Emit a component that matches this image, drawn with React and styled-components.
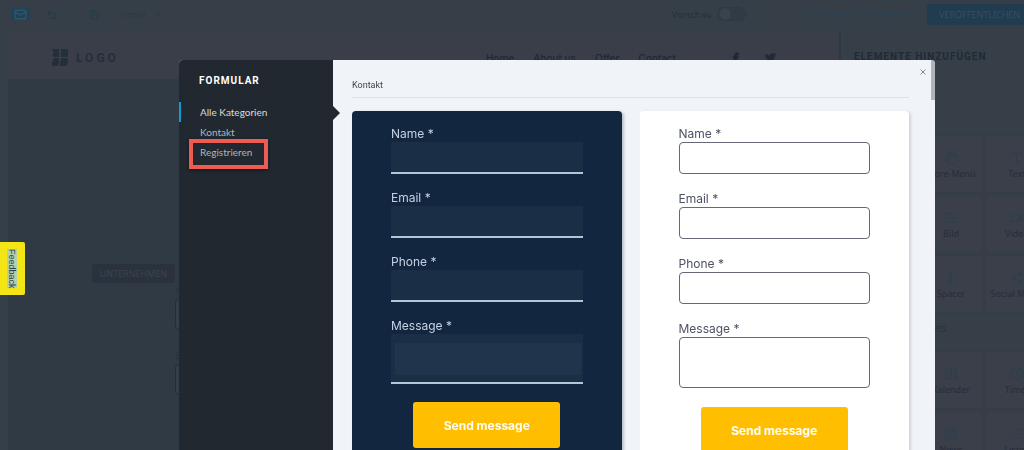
import React from 'react';
import styled, { createGlobalStyle } from 'styled-components';
import {
  Undo2, Redo2, Save, Mail, ChevronDown, MessageCircle, Facebook, Twitter, Type, Image as ImageIcon,
  Video, Share2, Grid2x2, Clock, FileText, List, MoveVertical, Hand, Menu, Square, Columns2,
} from 'lucide-react';

const GlobalStyle = createGlobalStyle`
  * { box-sizing: border-box; }
  body { margin: 0; overflow: hidden; background: #363f47; font-family: "Noto Sans", "Open Sans", sans-serif; }
  button, input, textarea { font: inherit; }
`;

const Editor = styled.div`
  display: flex;
  flex-direction: column;
  height: 100vh;
  overflow: hidden;
  background: #363f47;
  color: #28323e;
`;

const Toolbar = styled.header`
  display: flex;
  flex: none;
  align-items: center;
  height: 32px;
  padding: 0 0 4px 11px;
  color: #29465a;
  font-size: 9px;
`;

const MailButton = styled.button`
  display: flex;
  align-items: center;
  justify-content: center;
  width: 19px;
  height: 12px;
  margin-right: 16px;
  padding: 0;
  border: 0;
  background: #1f4459;
  color: #36596a;
`;

const ToolButton = styled.button`
  display: flex;
  align-items: center;
  gap: 8px;
  margin-right: ${(p) => p.$gap || 0}px;
  padding: 0;
  border: 0;
  background: none;
  color: ${(p) => (p.$faint ? '#31414b' : '#263b48')};
`;

const Preview = styled.label`
  display: flex;
  align-items: center;
  gap: 6px;
  margin: 0 11px 0 auto;
  color: #242f3b;
`;

const Toggle = styled.input`
  appearance: none;
  width: 29px;
  height: 14px;
  margin: 0;
  border: 1px solid #2f3943;
  border-radius: 7px;
  background: radial-gradient(circle at 7px 6px, #39434c 5px, #313b45 6px);
`;

const ToolLink = styled.a`
  width: 122px;
  margin-left: 37px;
  color: #2c4353;
  font-size: 10px;
  text-decoration: none;
  white-space: nowrap;
`;

const Publish = styled.button`
  width: 97px;
  height: 21px;
  padding: 0 0 0 12px;
  border: 0;
  border-radius: 2px 0 0 2px;
  background: #213b4f;
  color: #354f61;
  font-size: 9px;
  text-align: left;
  white-space: nowrap;
`;

const Workspace = styled.div`
  display: flex;
  flex: 1;
  min-height: 0;
  padding-left: 8px;
`;

const Canvas = styled.main`
  flex: 1;
  min-width: 0;
  background: #2f3a44;
`;

const SiteHeader = styled.div`
  display: flex;
  align-items: center;
  height: 47px;
  padding: 4px 63px 0 44px;
  background: #393e48;
`;

const Logo = styled.div`
  display: flex;
  flex: 1;
  align-items: center;
  gap: 7px;
  color: #252f3b;
  font-family: Roboto, sans-serif;
  font-size: 12px;
  font-weight: 700;
  letter-spacing: 3px;
`;

const SiteNav = styled.nav`
  display: flex;
  gap: 19px;
  align-items: center;
  color: #202936;
  font-family: Inter, sans-serif;
  font-size: 10px;
  font-weight: 500;

  a { color: inherit; text-decoration: none; }
`;

const Social = styled.div`
  display: flex;
  gap: 24px;
  margin-left: 35px;
`;

const Hero = styled.section`
  display: flex;
  flex-direction: column;
  align-items: flex-start;
  padding: 185px 0 0 84px;
`;

const HeroButton = styled.button`
  width: 83px;
  height: 19px;
  padding: 0;
  border: 0;
  border-radius: 2px;
  background: #2a323e;
  color: #3b434e;
  font-size: 9px;
`;

const HeroForm = styled.div`
  display: grid;
  gap: 2px;
  margin: 2px 0 0 83px;
  font-size: 9px;
  line-height: 12px;
`;

const HeroField = styled.label`
  display: grid;
  align-content: start;
  gap: 2px;
  height: 63px;
`;

const HeroInput = styled.input`
  width: 200px;
  height: 31px;
  border: 1px solid #222d38;
  border-radius: 4px;
  background: #343f49;
`;

const Elements = styled.aside`
  flex: none;
  width: 185px;
  padding: 17px 0 0 13px;
  border-left: 2px solid #303842;
  overflow: hidden;
`;

const ElementsTitle = styled.h2`
  margin: 0;
  color: #202a36;
  font-family: Roboto, sans-serif;
  font-size: 10px;
  line-height: 16px;
  font-weight: 700;
  letter-spacing: 1px;
  white-space: nowrap;
`;

const Group = styled.h3`
  margin: ${(p) => (p.$first ? '51px 0 4px' : '8px 0 16px')};
  padding-left: 54px;
  font-size: 10px;
  line-height: 16px;
  font-weight: 400;
`;

const Tiles = styled.div`
  display: grid;
  grid-template-columns: repeat(3, 62px);
  grid-auto-rows: 56px;
  gap: 4px;
`;

const Tile = styled.button`
  display: flex;
  flex-direction: column;
  align-items: center;
  justify-content: flex-end;
  gap: 2px;
  padding: 0 0 11px;
  border: 0;
  border-radius: 2px;
  background: #3a3f49;
  box-shadow: 0 0 2px #333b45;
  color: #262e3a;
  font-size: 9px;
  line-height: 14px;
  white-space: nowrap;

  svg { color: #2c404c; }
`;

const Feedback = styled.button`
  position: fixed;
  top: 242px;
  left: 0;
  width: 25px;
  height: 53px;
  padding: 0 2px 0 0;
  border: 0;
  border-radius: 0 2px 2px 0;
  background: #f4e616;
  color: #27414f;
  font-family: "Liberation Sans", sans-serif;
  font-size: 9px;
  line-height: 9px;
  writing-mode: vertical-rl;

  span { background: #b5cfae; }
`;

const Overlay = styled.div`
  position: fixed;
  inset: 60px 89px 0 179px;
  display: flex;
`;

const Dialog = styled.section`
  display: flex;
  flex: 1;
  border-radius: 4px 4px 0 0;
  overflow: hidden;
  background: #f0f3f8;
`;

const Side = styled.aside`
  flex: none;
  width: 154px;
  padding-top: 13px;
  background: #222830;
`;

const SideTitle = styled.h1`
  margin: 0 0 13px;
  padding-left: 20px;
  color: #ffffff;
  font-family: Roboto, sans-serif;
  font-size: 10px;
  font-weight: 700;
  line-height: 16px;
  letter-spacing: 1px;
`;

const Category = styled.a`
  position: relative;
  display: block;
  padding-left: 19px;
  border-left: 2px solid ${(p) => (p.$active ? '#179bcc' : 'transparent')};
  color: ${(p) => (p.$active ? '#d9dcdf' : '#b0b4b9')};
  font-family: Lato, sans-serif;
  font-size: 10px;
  line-height: 20px;
  text-decoration: none;
`;

const Highlight = styled.span`
  position: absolute;
  inset: -3px auto -7px 8px;
  width: 79px;
  border: 4px solid #ee5b50;
  box-shadow: 0 1px 3px #11151b;
`;

const Content = styled.div`
  position: relative;
  flex: 1;
  min-width: 0;
  padding: 18px 26px 0 19px;

  &::before {
    content: '';
    position: absolute;
    top: 46px;
    left: 0;
    border: solid transparent;
    border-width: 7px 0 7px 7px;
    border-left-color: #222830;
  }

  &::after {
    content: '';
    position: absolute;
    top: 0;
    right: 0;
    width: 4px;
    height: 40px;
    background: #b0b3ba;
  }
`;

const Close = styled.button`
  position: absolute;
  top: 8px;
  right: 8px;
  display: flex;
  padding: 0;
  border: 0;
  background: none;
  color: #858b92;
`;

const ContentTitle = styled.h2`
  margin: 0 0 13px;
  padding-bottom: 4px;
  border-bottom: 1px solid #dde1e6;
  color: #42464b;
  font-family: Roboto, sans-serif;
  font-size: 9px;
  font-weight: 400;
  line-height: 15px;
`;

const Cards = styled.div`
  display: grid;
  grid-template-columns: 1fr 1fr;
  gap: 18px;
`;

const Card = styled.form`
  display: flex;
  flex-direction: column;
  gap: ${(p) => (p.$dark ? 16 : 17)}px;
  height: 400px;
  padding: 15px 39px;
  border-radius: 4px;
  background: ${(p) => (p.$dark ? '#12263f' : '#ffffff')};
  box-shadow: 2px 1px 3px ${(p) => (p.$dark ? '#b9c0ca' : '#d0d2d8')};
  color: ${(p) => (p.$dark ? '#c5d2e2' : '#4c5263')};
  font-family: Inter, sans-serif;
`;

const Field = styled.label`
  display: flex;
  flex-direction: column;
  font-size: 12px;
  line-height: 16px;
`;

const boxStyle = (p) =>
  p.$dark
    ? 'border: 0; border-bottom: 2px solid #b3c6d6; background: #1a2e45;'
    : 'border: 1px solid #65677b; border-radius: 4px; background: #ffffff;';

const Input = styled.input`
  width: 100%;
  height: 32px;
  ${boxStyle}
`;

const Area = styled.textarea`
  width: 100%;
  height: ${(p) => (p.$dark ? 50 : 51)}px;
  resize: none;
  ${boxStyle}
  ${(p) => p.$dark && 'background: linear-gradient(#20354b, #20354b) 4px 9px / calc(100% - 6px) 32px no-repeat #1a2e45;'}
`;

const Send = styled.button`
  align-self: center;
  width: 147px;
  height: 46px;
  margin-top: 2px;
  padding: 0;
  border: 0;
  border-radius: 3px;
  background: #ffbf00;
  color: #fffdf0;
  font-size: 12px;
  font-weight: 700;
`;

const LogoMark = () => (
  <svg width="17" height="17" viewBox="0 0 17 17" fill="currentColor" aria-hidden="true">
    <path d="M0 0h7v8H2L0 6l2-2zM9 0h6l1 2v6H9V6L8 5l1-1zM2 9h5v5l-1 3H0v-4l1-1zM9 9h6l1 2v3l-2 3H8v-4l1-1z" />
  </svg>
);

const CloseMark = () => (
  <svg width="8" height="8" viewBox="0 0 8 8" fill="none" stroke="currentColor" aria-hidden="true">
    <path d="M1.5 1.5l5 5M6.5 1.5l-5 5" />
  </svg>
);

const basics = [
  ['Button', Square], ['Store-Menü', Hand], ['Text', Type],
  ['Icon', Grid2x2], ['Bild', Menu], ['Video', Video],
  ['Spalten', Columns2], ['Spacer', MoveVertical], ['Social Media', Share2],
];
const extras = [
  ['Formular', FileText], ['Kalender', Grid2x2], ['Timer', Clock],
  ['Bilder', ImageIcon], ['News', FileText], ['Listen', List],
];

function TileGrid({ items }) {
  return (
    <Tiles>
      {items.map(([name, Icon]) => (
        <Tile key={name} type="button"><Icon size={14} strokeWidth={2} />{name}</Tile>
      ))}
    </Tiles>
  );
}

function ContactForm({ dark = false }) {
  return (
    <Card $dark={dark}>
      {['Name', 'Email', 'Phone'].map((name) => (
        <Field key={name}>{name} *<Input type="text" $dark={dark} /></Field>
      ))}
      <Field>Message *<Area $dark={dark} /></Field>
      <Send type="button">Send message</Send>
    </Card>
  );
}

export default function App() {
  return (
    <>
      <GlobalStyle />
      <Editor>
        <Toolbar>
          <MailButton aria-label="Mail"><Mail size={13} strokeWidth={2} /></MailButton>
          <ToolButton $gap={11} aria-label="Undo"><Undo2 size={11} strokeWidth={3} /></ToolButton>
          <ToolButton $gap={10} $faint aria-label="Redo"><Redo2 size={11} /></ToolButton>
          <ToolButton $gap={20} aria-label="Save"><Save size={11} strokeWidth={2} /></ToolButton>
          <ToolButton>Home<ChevronDown size={8} strokeWidth={3} /></ToolButton>
          <Preview>Vorschau<Toggle type="checkbox" /></Preview>
          <ToolButton $faint aria-label="Comments"><MessageCircle size={11} /></ToolButton>
          <ToolLink href="#save">Speichern und beenden</ToolLink>
          <Publish>VERÖFFENTLICHEN</Publish>
        </Toolbar>
        <Workspace>
          <Canvas>
            <SiteHeader>
              <Logo><LogoMark />LOGO</Logo>
              <SiteNav>
                <a href="#home">Home</a>
                <a href="#about">About us</a>
                <a href="#offer">Offer</a>
                <a href="#contact">Contact</a>
                <Social>
                  <Facebook size={11} fill="currentColor" />
                  <Twitter size={11} fill="currentColor" />
                </Social>
              </SiteNav>
            </SiteHeader>
            <Hero>
              <HeroButton>UNTERNEHMEN</HeroButton>
              <HeroForm>
                <HeroField>Name<HeroInput /></HeroField>
                <HeroField>Email<HeroInput /></HeroField>
              </HeroForm>
            </Hero>
          </Canvas>
          <Elements>
            <ElementsTitle>ELEMENTE HINZUFÜGEN</ElementsTitle>
            <Group $first>Basis</Group>
            <TileGrid items={basics} />
            <Group>Widgets</Group>
            <TileGrid items={extras} />
          </Elements>
        </Workspace>
      </Editor>
      <Feedback><span>Feedback</span></Feedback>
      <Overlay>
        <Dialog role="dialog" aria-label="Formular">
          <Side>
            <SideTitle>FORMULAR</SideTitle>
            <nav>
              <Category href="#all" $active>Alle Kategorien</Category>
              <Category href="#contact-forms">Kontakt</Category>
              <Category href="#register">Registrieren<Highlight /></Category>
            </nav>
          </Side>
          <Content>
            <Close aria-label="Close"><CloseMark /></Close>
            <ContentTitle>Kontakt</ContentTitle>
            <Cards>
              <ContactForm dark />
              <ContactForm />
            </Cards>
          </Content>
        </Dialog>
      </Overlay>
    </>
  );
}
